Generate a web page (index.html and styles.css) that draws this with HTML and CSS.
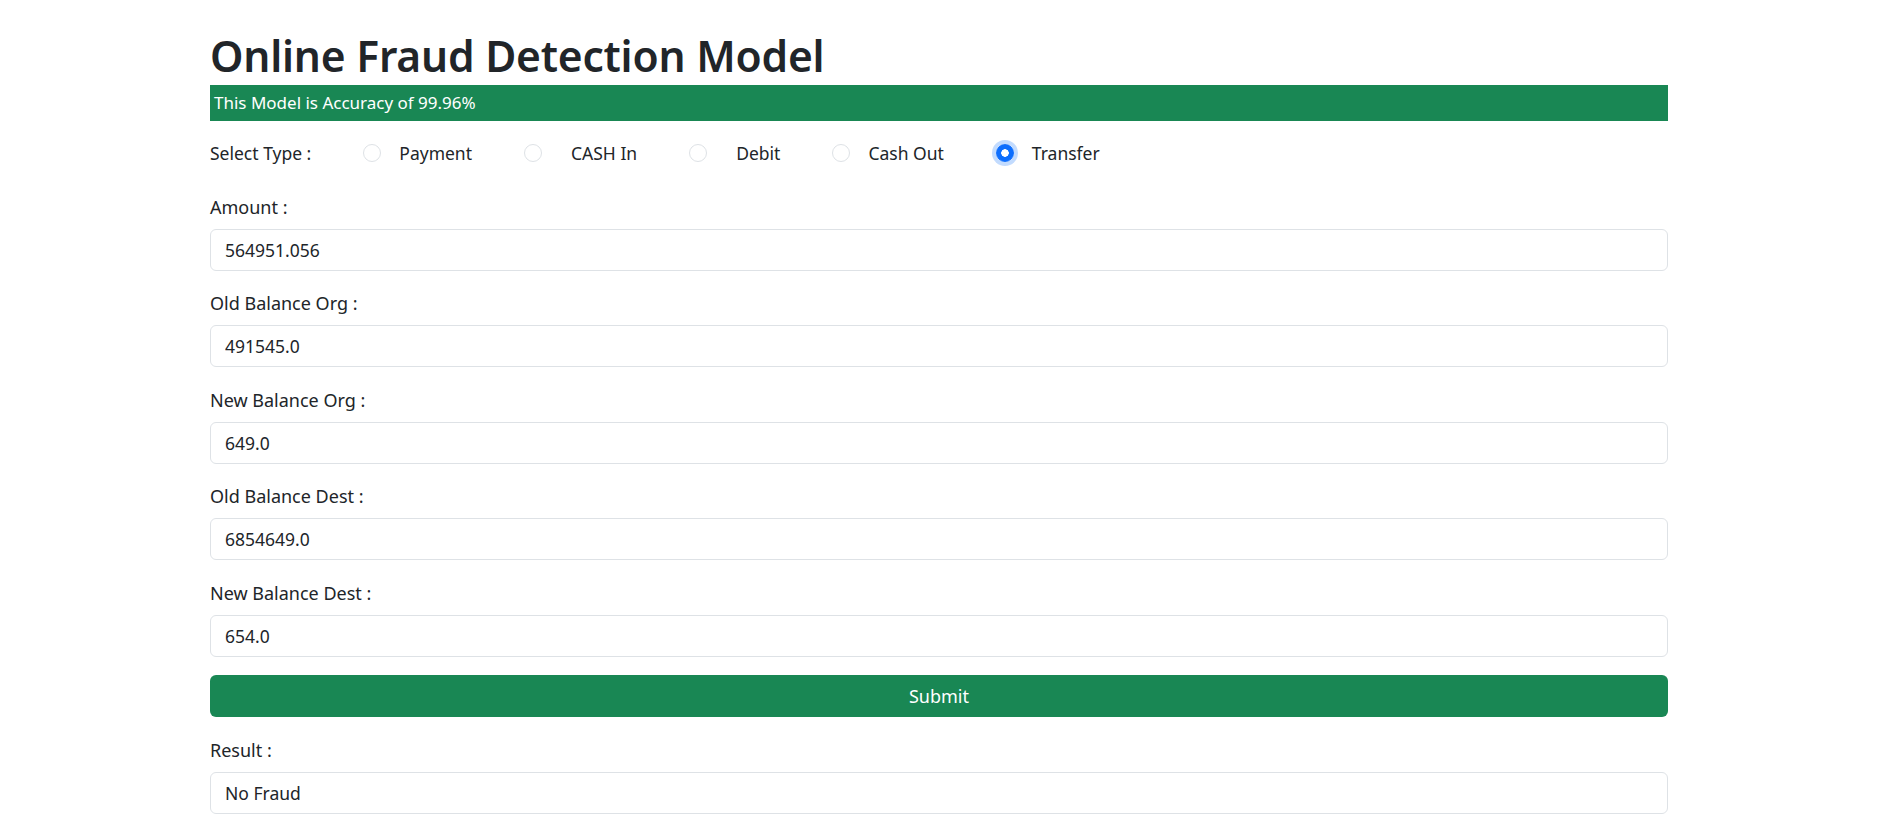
FILE: index.html
```html
<!DOCTYPE html>
<html lang="en">
<head>
<meta charset="utf-8">
<title>Online Fraud Detection Model</title>
<link rel="stylesheet" href="styles.css">
</head>
<body>
<main class="container">
  <h1 class="title">Online Fraud Detection Model</h1>
  <div class="banner">This Model is Accuracy of 99.96%</div>

  <div class="type-row">
    <span class="type-label">Select Type :</span>
    <label class="choice"><input type="radio" name="type"><span>Payment</span></label>
    <label class="choice"><input type="radio" name="type"><span class="wide">CASH In</span></label>
    <label class="choice"><input type="radio" name="type"><span class="wide">Debit</span></label>
    <label class="choice"><input type="radio" name="type"><span>Cash Out</span></label>
    <label class="choice"><input type="radio" name="type" checked class="focused"><span>Transfer</span></label>
  </div>

  <div class="field">
    <label class="field-label">Amount :</label>
    <input class="field-input" type="text" value="564951.056">
  </div>
  <div class="field">
    <label class="field-label">Old Balance Org :</label>
    <input class="field-input" type="text" value="491545.0">
  </div>
  <div class="field">
    <label class="field-label">New Balance Org :</label>
    <input class="field-input" type="text" value="649.0">
  </div>
  <div class="field">
    <label class="field-label">Old Balance Dest :</label>
    <input class="field-input" type="text" value="6854649.0">
  </div>
  <div class="field">
    <label class="field-label">New Balance Dest :</label>
    <input class="field-input" type="text" value="654.0">
  </div>

  <button class="submit" type="button">Submit</button>

  <div class="field result">
    <label class="field-label">Result :</label>
    <input class="field-input" type="text" value="No Fraud">
  </div>
</main>
</body>
</html>
```

FILE: styles.css
```css
* { box-sizing: border-box; }

body {
  margin: 0;
  background: #ffffff;
  color: #212529;
  font-family: "Noto Sans", "Open Sans", "DejaVu Sans", sans-serif;
  font-size: 18px;
  line-height: 1.5;
}

.container {
  width: 1458px;
  margin-left: 210px;
  padding-top: 27px;
}

.title {
  margin: 0;
  font-size: 42.5px;
  font-weight: 600;
  line-height: 58px;
  color: #212529;
  letter-spacing: -0.2px;
}

.banner {
  height: 36px;
  background: #198754;
  color: #ffffff;
  font-size: 17px;
  line-height: 36px;
  padding-left: 4px;
}

.type-row {
  display: flex;
  align-items: center;
  gap: 52px;
  height: 30px;
  margin-top: 17px;
  font-size: 17.5px;
}

.choice {
  display: flex;
  align-items: center;
  gap: 18px;
}

.choice .wide {
  margin-left: 11px;
}

.choice input {
  appearance: none;
  -webkit-appearance: none;
  margin: 0;
  width: 18px;
  height: 18px;
  border: 1px solid #dee2e6;
  border-radius: 50%;
  background: #ffffff;
}

.choice input:checked {
  border-color: #0d6efd;
  background: radial-gradient(circle, #ffffff 0 3.5px, #0d6efd 4px);
}

.choice input.focused {
  box-shadow: 0 0 0 4px rgba(13, 110, 253, 0.25);
}

.field {
  margin-top: 17.4px;
}

.type-row + .field {
  margin-top: 24px;
}

.field.result {
  margin-top: 18px;
}

.field-label {
  display: block;
  line-height: 30px;
  margin-bottom: 7px;
}

.field-input {
  display: block;
  width: 100%;
  height: 42px;
  padding: 0 14px;
  border: 1px solid #dee2e6;
  border-radius: 6px;
  font-family: inherit;
  font-size: 17.5px;
  color: #212529;
  background: #ffffff;
}

.submit {
  display: block;
  width: 100%;
  height: 42px;
  margin-top: 18px;
  border: none;
  border-radius: 6px;
  background: #198754;
  color: #ffffff;
  font-family: inherit;
  font-size: 18px;
}
```
